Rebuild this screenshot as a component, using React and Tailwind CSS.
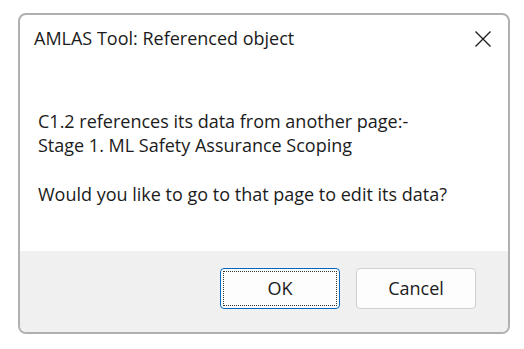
import React from 'react';

export default function App() {
  return (
    <div
      className="w-[524px] h-[349px] bg-white overflow-hidden"
      style={{ fontFamily: '"Open Sans", "Noto Sans", sans-serif' }}
    >
      <div className="ml-[18px] mt-[13px] w-[492px] h-[321px] rounded-[8px] border-2 border-[#b0b0b0] bg-white overflow-hidden flex flex-col">
        <div className="flex items-start justify-between pl-[14px] pr-[16px] pt-[11px] h-[60px]">
          <span className="text-[18px] leading-[24px] text-[#1b1b1b]">AMLAS Tool: Referenced object</span>
          <svg width="18" height="18" viewBox="0 0 18 18" className="mt-[4px]">
            <path d="M1.5 1.5 L16.5 16.5 M16.5 1.5 L1.5 16.5" stroke="#1b1b1b" strokeWidth="1.3" fill="none" />
          </svg>
        </div>
        <div className="flex-1 pl-[18px] pt-[34px] text-[18px] leading-[24px] text-[#1b1b1b]">
          <p>C1.2 references its data from another page:-</p>
          <p>Stage 1. ML Safety Assurance Scoping</p>
          <p className="mt-[25px]">Would you like to go to that page to edit its data?</p>
        </div>
        <div className="h-[81px] bg-[#f0f0f0] flex justify-end items-start gap-[16px] pt-[17px] pr-[32px]">
          <button className="w-[120px] h-[41px] rounded-[4px] border border-[#0067c0] bg-[#fdfdfd] p-[2px] text-[18px] text-[#1b1b1b]">
            <span className="flex w-full h-full items-center justify-center border border-dotted border-[#333]">OK</span>
          </button>
          <button className="w-[120px] h-[41px] rounded-[4px] border border-[#d0d0d0] bg-[#fdfdfd] text-[18px] text-[#1b1b1b]">
            Cancel
          </button>
        </div>
      </div>
    </div>
  );
}
